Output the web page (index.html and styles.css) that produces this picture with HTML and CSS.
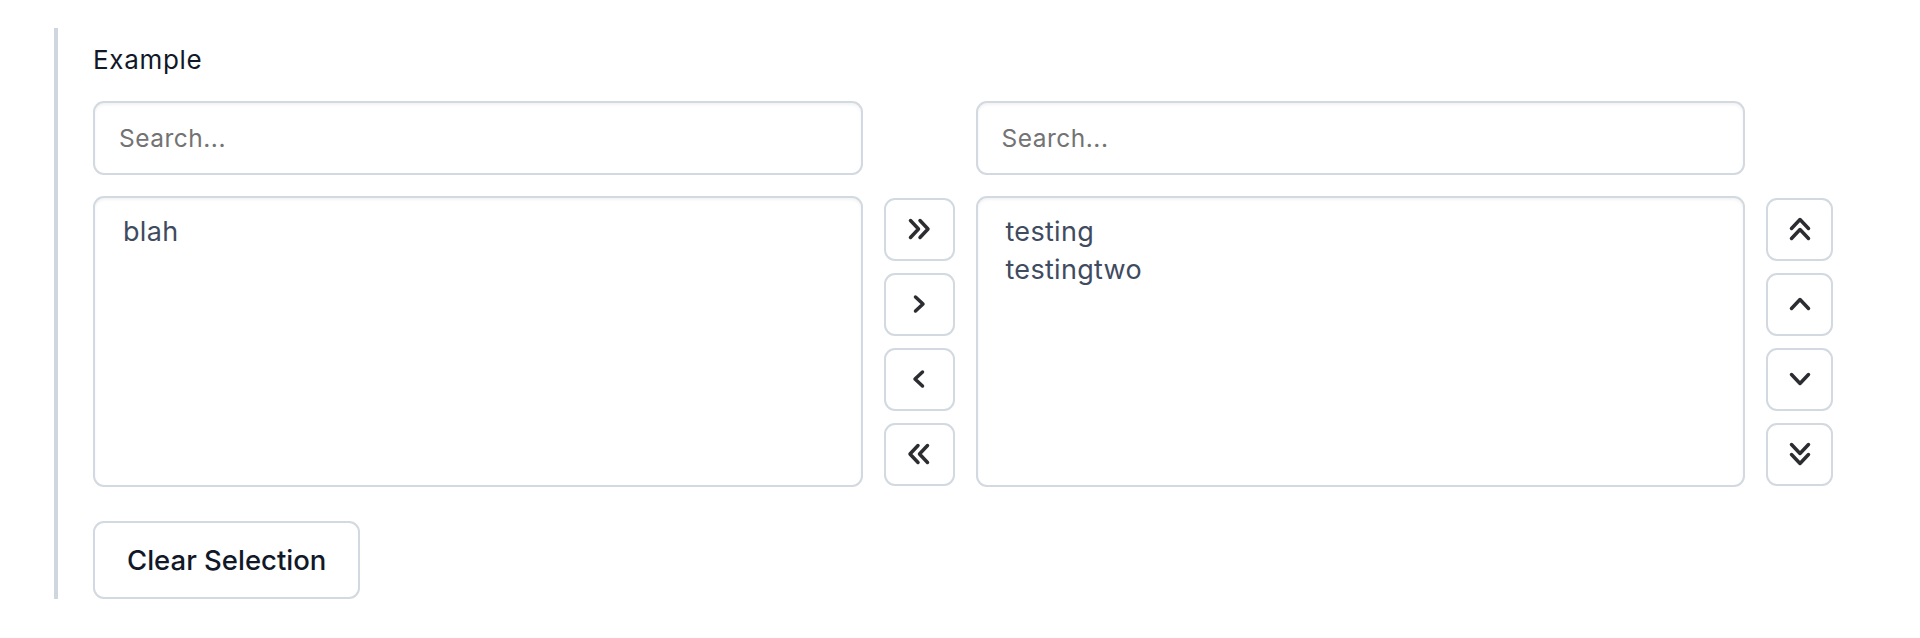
FILE: index.html
```html
<!DOCTYPE html>
<html>
<head>
<meta charset="utf-8">
<link rel="stylesheet" href="styles.css">
</head>
<body>
<div class="page">
  <section class="example">
    <div class="label">Example</div>
    <div class="grid">
      <input class="search" type="text" placeholder="Search...">
      <div></div>
      <input class="search" type="text" placeholder="Search...">
      <div></div>

      <div class="listbox">
        <div class="opt">blah</div>
      </div>
      <div class="btncol">
        <button class="ibtn"><svg viewBox="0 0 24 24" width="24" height="24"><path d="M3.5 3.5l8 8.5-8 8.5M13 3.5l8 8.5-8 8.5"/></svg></button>
        <button class="ibtn"><svg viewBox="0 0 24 24" width="24" height="24"><path d="M8.5 5l7.5 7-7.5 7"/></svg></button>
        <button class="ibtn"><svg viewBox="0 0 24 24" width="24" height="24"><path d="M15.5 5L8 12l7.5 7"/></svg></button>
        <button class="ibtn"><svg viewBox="0 0 24 24" width="24" height="24"><path d="M11 3.5L3 12l8 8.5M20.5 3.5l-8 8.5 8 8.5"/></svg></button>
      </div>
      <div class="listbox">
        <div class="opt">testing</div>
        <div class="opt">testingtwo</div>
      </div>
      <div class="btncol">
        <button class="ibtn"><svg viewBox="0 0 24 24" width="24" height="24"><path d="M3.5 11.5l8.5-9 8.5 9M3.5 21.5l8.5-9 8.5 9"/></svg></button>
        <button class="ibtn"><svg viewBox="0 0 24 24" width="24" height="24"><path d="M3.5 16.5l8.5-9 8.5 9"/></svg></button>
        <button class="ibtn"><svg viewBox="0 0 24 24" width="24" height="24"><path d="M3.5 7.5l8.5 9 8.5-9"/></svg></button>
        <button class="ibtn"><svg viewBox="0 0 24 24" width="24" height="24"><path d="M3.5 2.5l8.5 9 8.5-9M3.5 12.5l8.5 9 8.5-9"/></svg></button>
      </div>
    </div>
    <button class="clear">Clear Selection</button>
  </section>
</div>
</body>
</html>
```
FILE: styles.css
```css
* { box-sizing: border-box; }
html, body { margin: 0; background: #ffffff; }
body { font-family: Inter, "Noto Sans", sans-serif; color: #0f172a; }

.page {
  padding: 28px 87px 0 54px;
}

.example {
  border-left: 4px solid #cfd6df;
  padding: 15px 0 0 35px;
  display: flex;
  flex-direction: column;
  align-items: flex-start;
}

.label {
  font-size: 26px;
  letter-spacing: 0.7px;
  line-height: 34px;
  color: #111827;
  margin-bottom: 24px;
}

.grid {
  width: 100%;
  display: grid;
  grid-template-columns: 1fr 71px 1fr 67px;
  grid-template-rows: 74px 291px;
  gap: 21px;
}

.search {
  font-family: inherit;
  font-size: 24.5px;
  letter-spacing: 0.5px;
  color: #334155;
  height: 74px;
  width: 100%;
  border: 2px solid #d3d9e0;
  border-radius: 11px;
  padding: 0 24px;
  box-shadow: inset 0 2px 3px rgba(15, 23, 42, 0.05);
  outline: none;
  background: #fff;
}
.search::placeholder { color: #737373; opacity: 1; }

.listbox {
  border: 2px solid #d3d9e0;
  border-radius: 11px;
  padding: 15px 28px;
  box-shadow: inset 0 2px 3px rgba(15, 23, 42, 0.05);
  background: #fff;
}
.opt {
  font-size: 27px;
  letter-spacing: 0.3px;
  line-height: 38px;
  color: #3f4b5f;
}

.btncol {
  display: flex;
  flex-direction: column;
  justify-content: center;
  gap: 12px;
}

.ibtn {
  height: 63px;
  width: 100%;
  border: 2px solid #d3d9e0;
  border-radius: 11px;
  background: #fff;
  display: flex;
  align-items: center;
  justify-content: center;
  padding: 0;
}
.ibtn svg {
  fill: none;
  stroke: #2b2d31;
  stroke-width: 3.5;
  stroke-linecap: round;
  stroke-linejoin: round;
}

.clear {
  margin-top: 34px;
  font-family: inherit;
  font-size: 27.5px;
  font-weight: 500;
  color: #111827;
  height: 78px;
  padding: 0 32px;
  border: 2px solid #d3d9e0;
  border-radius: 11px;
  background: #fff;
}
```
